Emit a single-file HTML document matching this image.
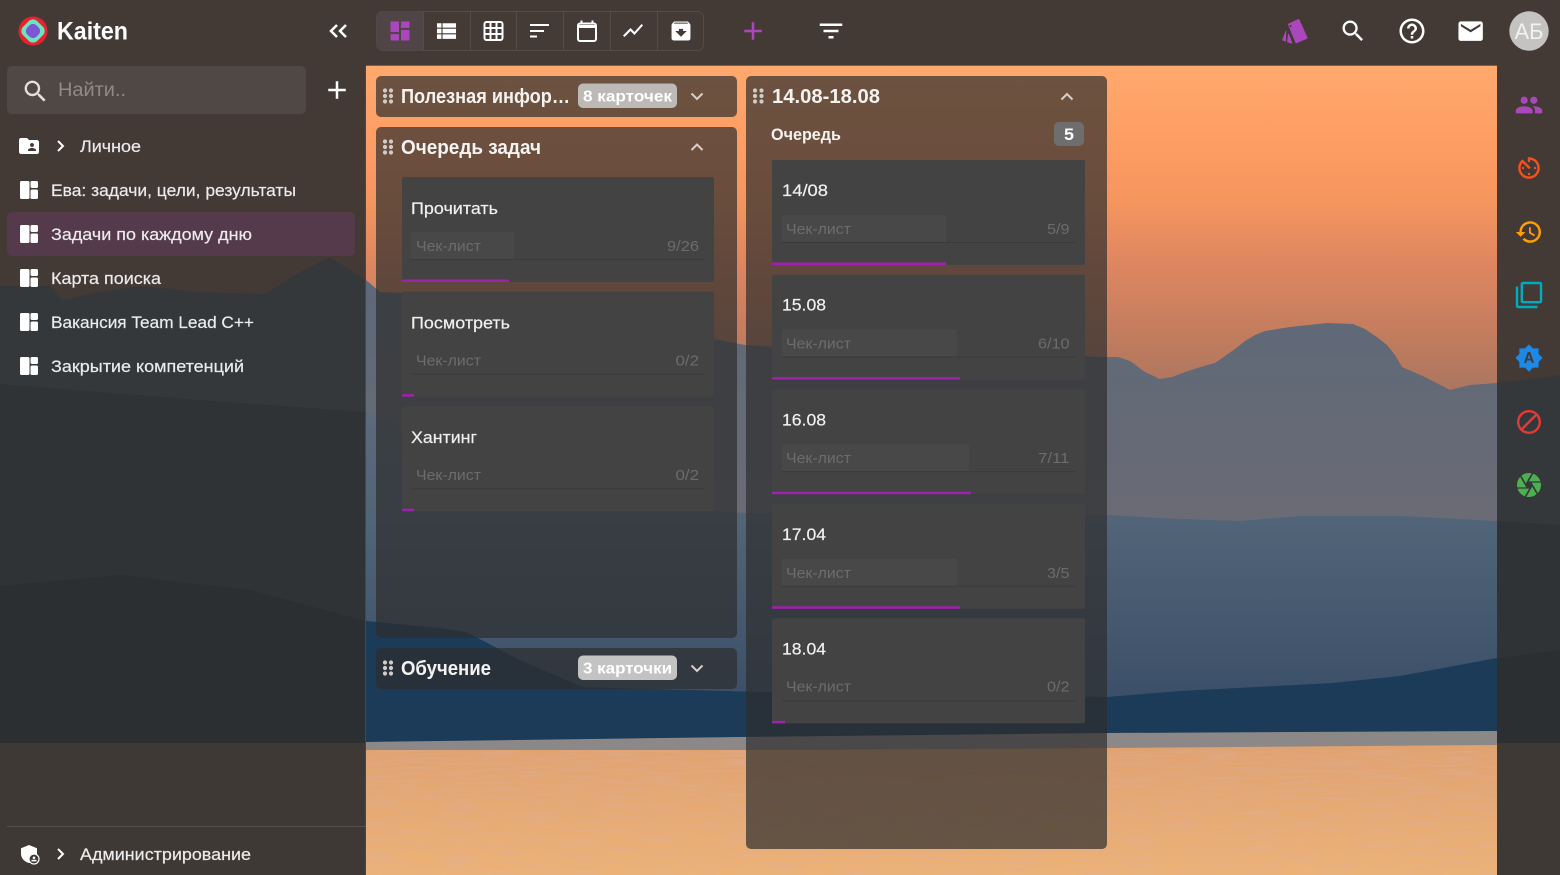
<!DOCTYPE html>
<html lang="ru"><head><meta charset="utf-8"><title>Kaiten</title>
<style>
html,body{margin:0;padding:0;width:1560px;height:875px;overflow:hidden;background:#433a36}
svg{display:block;position:absolute;left:0;top:0}
text{font-family:"Liberation Sans","Noto Sans CJK SC",sans-serif}
</style></head><body>
<svg width="1560" height="875" viewBox="0 0 1560 875" xmlns="http://www.w3.org/2000/svg">
<defs>
<linearGradient id="sky" gradientUnits="userSpaceOnUse" x1="0" y1="66" x2="0" y2="400">
<stop offset="0" stop-color="#ffa96e"/><stop offset=".25" stop-color="#fd9c63"/><stop offset=".4" stop-color="#f5965f"/><stop offset=".61" stop-color="#dc8560"/><stop offset=".82" stop-color="#c07c5e"/><stop offset="1" stop-color="#a87560"/>
</linearGradient>
<linearGradient id="m1" gradientUnits="userSpaceOnUse" x1="0" y1="260" x2="0" y2="530"><stop offset="0" stop-color="#5c6878"/><stop offset="1" stop-color="#6b6b75"/></linearGradient>
<linearGradient id="m2" gradientUnits="userSpaceOnUse" x1="0" y1="400" x2="0" y2="700"><stop offset="0" stop-color="#5d6b7b"/><stop offset=".4" stop-color="#526478"/><stop offset="1" stop-color="#3b4f68"/></linearGradient>
<linearGradient id="water" gradientUnits="userSpaceOnUse" x1="0" y1="745" x2="0" y2="875"><stop offset="0" stop-color="#e0a270"/><stop offset="1" stop-color="#edb275"/></linearGradient>
<filter id="ripple" x="0" y="0" width="100%" height="100%"><feTurbulence type="fractalNoise" baseFrequency="0.025 0.4" numOctaves="2" seed="4"/><feColorMatrix values="0 0 0 0 .72  0 0 0 0 .42  0 0 0 0 .36  1.6 0 0 0 -.62"/></filter>
<path id="pm1" d="M0 286L50 286 62 300 100 292 140 286 200 292 265 294 300 272 330 257 366 280 380 292 440 295 520 305 600 318 680 333 745 345 850 352 960 350 1040 355 1107 357 1118 357 1130 361 1145 372 1160 379 1172 377 1185 372 1207 365 1215 363 1225 356 1235 349 1245 341 1255 335 1265 331 1290 327 1327 323 1353 324 1365 329 1378 338 1387 345 1395 355 1402 367 1425 377 1450 390 1470 385 1497 383 1560 375V760H0Z"/>
<path id="pm2" d="M0 384L200 400 366 412 500 470 620 505 745 513 900 514 1107 515 1180 519 1240 521 1300 516 1400 516 1497 521 1560 525V760H0Z"/>
<path id="pm3" d="M0 586L120 575 250 590 366 621 440 628 466 632 520 660 583 687 800 693 1107 697 1180 691 1333 683 1400 676 1497 658 1560 650V760H0Z"/>
<clipPath id="rails"><rect x="0" y="66" width="366" height="809"/><rect x="1497" y="66" width="63" height="809"/></clipPath>
</defs>

<!-- background -->
<rect width="1560" height="875" fill="url(#sky)"/>
<use href="#pm1" fill="url(#m1)"/>
<use href="#pm2" fill="url(#m2)"/>
<use href="#pm3" fill="#1c3b58"/>
<path d="M0 743L366 742 740 737 1107 733 1497 731 1560 731V755H0Z" fill="#8c8888"/>
<path d="M0 752L366 750 800 750 1107 748 1497 745 1560 745V875H0Z" fill="url(#water)"/>
<rect x="366" y="750" width="1131" height="125" filter="url(#ripple)" opacity=".6"/>

<!-- chrome overlays -->
<rect x="0" y="0" width="1560" height="66" fill="#433a36"/>
<rect x="366" y="65" width="1131" height="1" fill="#6e645e"/>
<g clip-path="url(#rails)">
<rect x="0" y="66" width="1560" height="809" fill="#433a36"/>
<use href="#pm1" fill="#35383b"/>
<use href="#pm2" fill="#2f3336"/>
<use href="#pm3" fill="#2b2f32"/>
<rect x="0" y="743" width="1560" height="132" fill="#3f3935"/>
</g>
<rect x="365" y="66" width="1" height="809" fill="#4b4744"/>

<!-- left sidebar -->
<circle cx="33" cy="31" r="14.5" fill="#e9202e"/>
<rect x="23" y="21" width="20" height="20" rx="6" transform="rotate(45 33 31)" fill="#6ce4bd"/>
<rect x="26.5" y="24.500" width="13" height="13" rx="5" transform="rotate(45 33 31)" fill="#7d55d6"/>
<text x="57" y="39.500" font-size="25" font-weight="700" fill="#fff" textLength="71" lengthAdjust="spacingAndGlyphs">Kaiten</text>
<path d="M337 25l-6 6 6 6M346 25l-6 6 6 6" fill="none" stroke="#fff" stroke-width="2.500"/>
<rect x="7" y="66" width="299" height="48" rx="5" fill="#4f4844"/>
<g transform="translate(21 77) scale(1.2)" fill="#e2dfdc"><path d="M15.5 14h-.79l-.28-.27C15.41 12.59 16 11.11 16 9.500 16 5.910 13.090 3 9.500 3S3 5.910 3 9.500 5.910 16 9.500 16c1.610 0 3.090-.59 4.230-1.570l.27.28v.79l5 4.990L20.490 19l-4.990-5zm-6 0C7.010 14 5 11.990 5 9.500S7.010 5 9.500 5 14 7.010 14 9.500 11.990 14 9.500 14z"/></g>
<text x="58" y="96" font-size="19" fill="#918b87" textLength="68" lengthAdjust="spacingAndGlyphs">Найти..</text>
<g transform="translate(322 75) scale(1.25)" fill="#fff"><path d="M19 13h-6v6h-2v-6H5v-2h6V5h2v6h6v2z"/></g>

<g transform="translate(17 134)" fill="#fff"><path d="M20 6h-8l-2-2H4c-1.100 0-1.990.9-1.990 2L2 18c0 1.100.9 2 2 2h16c1.100 0 2-.9 2-2V8c0-1.100-.9-2-2-2zm-5 3c1.100 0 2 .9 2 2s-.9 2-2 2-2-.9-2-2 .9-2 2-2zm4 8h-8v-1c0-1.330 2.670-2 4-2s4 .67 4 2v1z"/></g>
<path d="M58 141l5 5-5 5" fill="none" stroke="#fff" stroke-width="2"/>
<text x="80" y="152" font-size="17" fill="#ebebeb" stroke="#ebebeb" stroke-width=".2" textLength="61" lengthAdjust="spacingAndGlyphs">Личное</text>

<rect x="7" y="212" width="348" height="44" rx="5" fill="#553a4c"/>

<g fill="#fff">
<rect x="20" y="181" width="9.500" height="18" rx="1.500"/><rect x="30.500" y="181" width="7.500" height="7" rx="1.500"/><rect x="30.500" y="189.500" width="7.500" height="9.500" rx="1.500"/>
<rect x="20" y="225" width="9.500" height="18" rx="1.500"/><rect x="30.500" y="225" width="7.500" height="7" rx="1.500"/><rect x="30.500" y="233.500" width="7.500" height="9.500" rx="1.500"/>
<rect x="20" y="269" width="9.500" height="18" rx="1.500"/><rect x="30.500" y="269" width="7.500" height="7" rx="1.500"/><rect x="30.500" y="277.500" width="7.500" height="9.500" rx="1.500"/>
<rect x="20" y="313" width="9.500" height="18" rx="1.500"/><rect x="30.500" y="313" width="7.500" height="7" rx="1.500"/><rect x="30.500" y="321.500" width="7.500" height="9.500" rx="1.500"/>
<rect x="20" y="357" width="9.500" height="18" rx="1.500"/><rect x="30.500" y="357" width="7.500" height="7" rx="1.500"/><rect x="30.500" y="365.500" width="7.500" height="9.500" rx="1.500"/>
</g>
<g font-size="17" fill="#ebebeb" stroke="#ebebeb" stroke-width=".2">
<text x="51" y="196" textLength="245" lengthAdjust="spacingAndGlyphs">Ева: задачи, цели, результаты</text>
<text x="51" y="240" textLength="201" lengthAdjust="spacingAndGlyphs">Задачи по каждому дню</text>
<text x="51" y="284" textLength="110" lengthAdjust="spacingAndGlyphs">Карта поиска</text>
<text x="51" y="328" textLength="203" lengthAdjust="spacingAndGlyphs">Вакансия Team Lead C++</text>
<text x="51" y="372" textLength="193" lengthAdjust="spacingAndGlyphs">Закрытие компетенций</text>
<text x="80" y="860" textLength="171" lengthAdjust="spacingAndGlyphs">Администрирование</text>
</g>
<rect x="7" y="826" width="359" height="1" fill="#55504c"/>
<path d="M29 845l8 3.200v5.500c0 4.500-3.400 8-8 9.300-4.600-1.300-8-4.800-8-9.300v-5.500z" fill="#fff"/>
<circle cx="34" cy="859" r="5" fill="#3d3936" stroke="#fff" stroke-width="1.200"/><circle cx="34" cy="857.800" r="1.300" fill="#fff"/><rect x="31.500" y="859.800" width="5" height="1.600" fill="#fff"/>
<path d="M58 849l5 5-5 5" fill="none" stroke="#fff" stroke-width="2"/>

<!-- toolbar -->
<rect x="376.500" y="11.500" width="327" height="39" rx="6" fill="#443b37" stroke="#554c48"/>
<path d="M382.500 11.500H423.500V50.500H382.500a6 6 0 0 1-6-6V17.500a6 6 0 0 1 6-6Z" fill="#504447"/>
<g stroke="#554c48"><path d="M423.500 11.500v39M470.500 11.500v39M516.500 11.500v39M563.500 11.500v39M610.500 11.500v39M657.500 11.500v39"/></g>
<g transform="translate(387.400 18.400) scale(1.050)" fill="#ab47bc"><path d="M3 13h8V3H3v10zm0 8h8v-6H3v6zm10 0h8V11h-8v10zm0-18v6h8V3h-8z"/></g>
<g transform="translate(432.500 17.600) scale(1.120)" fill="#fff"><path d="M4 14h4v-4H4v4zm0 5h4v-4H4v4zM4 9h4V5H4v4zm5 5h12v-4H9v4zm0 5h12v-4H9v4zM9 5v4h12V5H9z"/></g>
<g fill="none" stroke="#fff" stroke-width="2"><rect x="484.500" y="22" width="18" height="18" rx="2"/><path d="M490.500 22v18M496.500 22v18M484.500 28h18M484.500 34h18" stroke-width="2"/></g>
<g fill="#fff"><rect x="530" y="24" width="19" height="2"/><rect x="530" y="30" width="14" height="2"/><rect x="530" y="35.500" width="7" height="2"/></g>
<g fill="none" stroke="#fff"><rect x="578" y="23.500" width="18" height="17.500" rx="2" stroke-width="2"/><path d="M578 26.500h18" stroke-width="3"/><path d="M581.500 20.500v3M592.500 20.500v3" stroke-width="2"/></g>
<g transform="translate(621 18.500)" fill="#fff"><path d="M3.500 18.490l6-6.010 4 4L22 6.920l-1.410-1.410-7.090 7.970-4-4L2 16.990z"/></g>
<g transform="translate(668.400 18.400) scale(1.050)" fill="#fff"><path d="M20.540 5.230l-1.390-1.680C18.880 3.210 18.470 3 18 3H6c-.47 0-.88.21-1.160.55L3.460 5.230C3.170 5.570 3 6.020 3 6.500V19c0 1.100.9 2 2 2h14c1.100 0 2-.9 2-2V6.500c0-.48-.17-.93-.46-1.270zM12 17.500L6.500 12H10v-2h4v2h3.500L12 17.500zM5.120 5l.81-1h12l.94 1H5.120z"/></g>
<g transform="translate(738 16) scale(1.250)" fill="#ab47bc"><path d="M19 13h-6v6h-2v-6H5v-2h6V5h2v6h6v2z"/></g>
<g transform="translate(816 16) scale(1.250)" fill="#fff"><path d="M10 18h4v-2h-4v2zM3 6v2h18V6H3zm3 7h12v-2H6v2z"/></g>

<!-- top right -->
<g fill="#ab47bc" stroke="#ab47bc" stroke-linejoin="round"><path d="M1286 31l-3.500 9 3 1.200z" stroke-width=".8"/><path d="M1288.500 34l-1 8 4.500 1.300z" stroke-width=".8"/><path d="M1289 24.500l9.500-4.500 8 17.800-10.200 4.500z" stroke-width="2"/></g>
<circle cx="1290.500" cy="26" r="1" fill="#433a36"/>
<g transform="translate(1339 17) scale(1.170)" fill="#fff"><path d="M15.500 14h-.79l-.28-.27C15.410 12.590 16 11.110 16 9.500 16 5.910 13.090 3 9.500 3S3 5.910 3 9.500 5.910 16 9.500 16c1.610 0 3.090-.59 4.230-1.570l.27.28v.79l5 4.990L20.490 19l-4.990-5zm-6 0C7.010 14 5 11.990 5 9.500S7.010 5 9.500 5 14 7.010 14 9.500 11.990 14 9.500 14z"/></g>
<g transform="translate(1397 16) scale(1.250)" fill="#fff"><path d="M11 18h2v-2h-2v2zm1-16C6.480 2 2 6.480 2 12s4.480 10 10 10 10-4.480 10-10S17.520 2 12 2zm0 18c-4.410 0-8-3.590-8-8s3.590-8 8-8 8 3.590 8 8-3.590 8-8 8zm0-14c-2.210 0-4 1.790-4 4h2c0-1.100.9-2 2-2s2 .9 2 2c0 2-3 1.750-3 5h2c0-2.250 3-2.500 3-5 0-2.210-1.790-4-4-4z"/></g>
<g transform="translate(1456 16.500) scale(1.220)" fill="#fff"><path d="M20 4H4c-1.100 0-1.990.9-1.990 2L2 18c0 1.100.9 2 2 2h16c1.100 0 2-.9 2-2V6c0-1.100-.9-2-2-2zm0 4l-8 5-8-5V6l8 5 8-5v2z"/></g>
<circle cx="1529" cy="31" r="19.700" fill="#c5c3c1"/>
<text x="1514.500" y="39" font-size="22" fill="#f2f2f2" textLength="29" lengthAdjust="spacingAndGlyphs">АБ</text>

<!-- right rail -->
<g transform="translate(1514.600 90.600) scale(1.200)" fill="#ab47bc"><path d="M16 11c1.660 0 2.990-1.340 2.990-3S17.660 5 16 5c-1.660 0-3 1.340-3 3s1.340 3 3 3zm-8 0c1.660 0 2.990-1.340 2.990-3S9.660 5 8 5C6.340 5 5 6.340 5 8s1.340 3 3 3zm0 2c-2.330 0-7 1.170-7 3.500V19h14v-2.500c0-2.330-4.670-3.500-7-3.500zm8 0c-.29 0-.62.02-.97.05 1.160.84 1.970 1.970 1.970 3.450V19h6v-2.500c0-2.330-4.670-3.500-7-3.500z"/></g>
<g transform="translate(1514.600 153.600) scale(1.200)" fill="#f4511e"><path d="M11 17c0 .55.45 1 1 1s1-.45 1-1-.45-1-1-1-1 .45-1 1zm0-14v4h2V5.080c3.390.49 6 3.390 6 6.920 0 3.870-3.130 7-7 7s-7-3.130-7-7c0-1.680.59-3.220 1.580-4.420L12 13l1.410-1.410-6.800-6.800v.02C4.420 6.450 3 9.050 3 12c0 4.970 4.020 9 9 9 4.970 0 9-4.030 9-9s-4.030-9-9-9h-1zm7 9c0-.55-.45-1-1-1s-1 .45-1 1 .45 1 1 1 1-.45 1-1zM6 12c0 .55.45 1 1 1s1-.45 1-1-.45-1-1-1-1 .45-1 1z"/></g>
<g transform="translate(1514.600 217.600) scale(1.200)" fill="#ffa000"><path d="M13 3c-4.970 0-9 4.030-9 9H1l3.890 3.890.07.14L9 12H6c0-3.870 3.130-7 7-7s7 3.130 7 7-3.130 7-7 7c-1.930 0-3.680-.79-4.940-2.060l-1.420 1.420C8.270 19.990 10.510 21 13 21c4.970 0 9-4.030 9-9s-4.030-9-9-9zm-1 5v5l4.280 2.540.72-1.210-3.500-2.080V8H12z"/></g>
<g transform="translate(1514.600 280.600) scale(1.200)" fill="#00acc1"><path d="M3 5H1v16c0 1.100.9 2 2 2h16v-2H3V5zm18-4H7c-1.100 0-2 .9-2 2v14c0 1.100.9 2 2 2h14c1.100 0 2-.9 2-2V3c0-1.100-.9-2-2-2zm0 16H7V3h14v14z"/></g>
<g transform="translate(1514.600 343.600) scale(1.200)" fill="#1e88e5"><path d="M10.850 12.650h2.300L12 9l-1.150 3.650zM20 8.690V4h-4.690L12 .69 8.690 4H4v4.690L.69 12 4 15.310V20h4.690L12 23.310 15.310 20H20v-4.690L23.310 12 20 8.690zM14.300 16l-.7-2h-3.200l-.7 2H7.800L11 7h2l3.200 9h-1.900z"/></g>
<g transform="translate(1514.600 407.600) scale(1.200)" fill="#e53935"><path d="M12 2C6.480 2 2 6.480 2 12s4.480 10 10 10 10-4.480 10-10S17.520 2 12 2zM4 12c0-4.420 3.580-8 8-8 1.850 0 3.550.63 4.900 1.690L5.690 16.900C4.630 15.550 4 13.850 4 12zm8 8c-1.850 0-3.550-.63-4.900-1.690L18.310 7.100C19.370 8.450 20 10.150 20 12c0 4.420-3.580 8-8 8z"/></g>
<g transform="translate(1514.600 470.600) scale(1.200)" fill="#4caf50"><path d="M9.400 10.500l4.770-8.260C13.470 2.090 12.750 2 12 2c-2.400 0-4.600.85-6.320 2.250l3.660 6.350.06-.1zM21.540 9c-.92-2.920-3.150-5.260-6-6.340L11.880 9h9.660zm.26 1h-7.490l.29.5 4.760 8.250C21 16.970 22 14.610 22 12c0-.69-.07-1.350-.2-2zM8.540 12l-3.900-6.750C3.010 7.030 2 9.390 2 12c0 .69.07 1.350.2 2h7.490l-1.150-2zm-6.080 3c.92 2.920 3.150 5.260 6 6.340L12.120 15H2.460zm11.270 0l-3.900 6.760c.7.15 1.420.24 2.170.24 2.400 0 4.600-.85 6.320-2.250l-3.660-6.350-.93 1.600z"/></g>

<!-- column panels -->
<g fill="#2d2d2d" fill-opacity=".7">
<rect x="376" y="76" width="361" height="41" rx="5"/>
<rect x="376" y="127" width="361" height="511" rx="5"/>
<rect x="376" y="648" width="361" height="41" rx="5"/>
<rect x="746" y="76" width="361" height="773" rx="5"/>
</g>
<g fill="#d0ccc8">
<circle cx="385" cy="90.500" r="2.100"/><circle cx="391" cy="90.500" r="2.100"/><circle cx="385" cy="96" r="2.100"/><circle cx="391" cy="96" r="2.100"/><circle cx="385" cy="101.500" r="2.100"/><circle cx="391" cy="101.500" r="2.100"/>
<circle cx="385" cy="141.500" r="2.100"/><circle cx="391" cy="141.500" r="2.100"/><circle cx="385" cy="147" r="2.100"/><circle cx="391" cy="147" r="2.100"/><circle cx="385" cy="152.500" r="2.100"/><circle cx="391" cy="152.500" r="2.100"/>
<circle cx="385" cy="662.500" r="2.100"/><circle cx="391" cy="662.500" r="2.100"/><circle cx="385" cy="668" r="2.100"/><circle cx="391" cy="668" r="2.100"/><circle cx="385" cy="673.500" r="2.100"/><circle cx="391" cy="673.500" r="2.100"/>
<circle cx="755" cy="90.500" r="2.100"/><circle cx="761.500" cy="90.500" r="2.100"/><circle cx="755" cy="96" r="2.100"/><circle cx="761.500" cy="96" r="2.100"/><circle cx="755" cy="101.500" r="2.100"/><circle cx="761.500" cy="101.500" r="2.100"/>
</g>
<g font-size="20" font-weight="700" fill="#f5f3f1">
<text x="401" y="103" textLength="169" lengthAdjust="spacingAndGlyphs">Полезная инфор…</text>
<text x="401" y="154" textLength="140" lengthAdjust="spacingAndGlyphs">Очередь задач</text>
<text x="401" y="675" textLength="90" lengthAdjust="spacingAndGlyphs">Обучение</text>
<text x="772" y="103" textLength="108" lengthAdjust="spacingAndGlyphs">14.08-18.08</text>
</g>
<rect x="578" y="83.500" width="99" height="24.500" rx="5" fill="#bdb9b6"/>
<rect x="578" y="655.500" width="99" height="24.500" rx="5" fill="#c3c3c3"/>
<g font-size="16" font-weight="700" fill="#fff">
<text x="583" y="101.500" textLength="89" lengthAdjust="spacingAndGlyphs">8 карточек</text>
<text x="583" y="673.500" textLength="89" lengthAdjust="spacingAndGlyphs">3 карточки</text>
</g>
<g fill="none" stroke="#d8d0ca" stroke-width="2">
<path d="M691.500 93.500l5.500 5.500 5.500-5.500"/>
<path d="M691.500 150l5.500-5.500 5.500 5.500"/>
<path d="M691.500 665.500l5.500 5.500 5.500-5.500"/>
<path d="M1061.500 99.500l5.500-5.500 5.500 5.500"/>
</g>
<text x="771" y="140" font-size="17" font-weight="700" fill="#f5f3f1" textLength="70" lengthAdjust="spacingAndGlyphs">Очередь</text>
<rect x="1054" y="122" width="30" height="24" rx="5" fill="#6e6e6e"/>
<text x="1064" y="140" font-size="17" font-weight="700" fill="#fff" textLength="10" lengthAdjust="spacingAndGlyphs">5</text>

<!-- cards -->
<g fill="#434343">
<rect x="402" y="177" width="312" height="105" rx="2"/>
<rect x="402" y="291.600" width="312" height="105" rx="2"/>
<rect x="402" y="406.200" width="312" height="105" rx="2"/>
<rect x="772" y="160" width="313" height="105" rx="2"/>
<rect x="772" y="274.600" width="313" height="105" rx="2"/>
<rect x="772" y="389.200" width="313" height="105" rx="2"/>
<rect x="772" y="503.800" width="313" height="105" rx="2"/>
<rect x="772" y="618.400" width="313" height="105" rx="2"/>
</g>
<g fill="#484848">
<rect x="411" y="232" width="103" height="27"/>
<rect x="782" y="215" width="164" height="27"/>
<rect x="782" y="329.600" width="175" height="27"/>
<rect x="782" y="444.200" width="187" height="27"/>
<rect x="782" y="558.800" width="175" height="27"/>
</g>
<g fill="#3a3a3a">
<rect x="411" y="259" width="293" height="1"/><rect x="411" y="373.600" width="293" height="1"/><rect x="411" y="488.200" width="293" height="1"/>
<rect x="782" y="242" width="293" height="1"/><rect x="782" y="356.600" width="293" height="1"/><rect x="782" y="471.200" width="293" height="1"/><rect x="782" y="585.800" width="293" height="1"/><rect x="782" y="700.400" width="293" height="1"/>
</g>
<g fill="#a020b0">
<rect x="402" y="279.500" width="107" height="2.500"/><rect x="402" y="394.100" width="12" height="2.500"/><rect x="402" y="508.700" width="12" height="2.500"/>
<rect x="772" y="262.500" width="174" height="2.500"/><rect x="772" y="377.100" width="188" height="2.500"/><rect x="772" y="491.700" width="199" height="2.500"/><rect x="772" y="606.300" width="188" height="2.500"/><rect x="772" y="720.900" width="13" height="2.500"/>
</g>
<g font-size="17" fill="#f0f0f0" stroke="#f0f0f0" stroke-width=".2">
<text x="411" y="214" textLength="87" lengthAdjust="spacingAndGlyphs">Прочитать</text>
<text x="411" y="328.600" textLength="99" lengthAdjust="spacingAndGlyphs">Посмотреть</text>
<text x="411" y="443" textLength="66" lengthAdjust="spacingAndGlyphs">Хантинг</text>
<text x="782" y="196" textLength="46" lengthAdjust="spacingAndGlyphs">14/08</text>
<text x="782" y="310.600" textLength="44" lengthAdjust="spacingAndGlyphs">15.08</text>
<text x="782" y="425.400" textLength="44" lengthAdjust="spacingAndGlyphs">16.08</text>
<text x="782" y="539.800" textLength="44" lengthAdjust="spacingAndGlyphs">17.04</text>
<text x="782" y="654.400" textLength="44" lengthAdjust="spacingAndGlyphs">18.04</text>
</g>
<g font-size="15" fill="#6c6c6c">
<text x="416" y="251" textLength="65" lengthAdjust="spacingAndGlyphs">Чек-лист</text><text x="667" y="251" textLength="32" lengthAdjust="spacingAndGlyphs">9/26</text>
<text x="416" y="365.600" textLength="65" lengthAdjust="spacingAndGlyphs">Чек-лист</text><text x="675.500" y="365.600" textLength="23.500" lengthAdjust="spacingAndGlyphs">0/2</text>
<text x="416" y="480.200" textLength="65" lengthAdjust="spacingAndGlyphs">Чек-лист</text><text x="675.500" y="480.200" textLength="23.500" lengthAdjust="spacingAndGlyphs">0/2</text>
<text x="786" y="234" textLength="65" lengthAdjust="spacingAndGlyphs">Чек-лист</text><text x="1047" y="234" textLength="22.500" lengthAdjust="spacingAndGlyphs">5/9</text>
<text x="786" y="348.600" textLength="65" lengthAdjust="spacingAndGlyphs">Чек-лист</text><text x="1038" y="348.600" textLength="31.500" lengthAdjust="spacingAndGlyphs">6/10</text>
<text x="786" y="463.200" textLength="65" lengthAdjust="spacingAndGlyphs">Чек-лист</text><text x="1038" y="463.200" textLength="31.500" lengthAdjust="spacingAndGlyphs">7/11</text>
<text x="786" y="577.800" textLength="65" lengthAdjust="spacingAndGlyphs">Чек-лист</text><text x="1047" y="577.800" textLength="22.500" lengthAdjust="spacingAndGlyphs">3/5</text>
<text x="786" y="691.600" textLength="65" lengthAdjust="spacingAndGlyphs">Чек-лист</text><text x="1047" y="691.600" textLength="22.500" lengthAdjust="spacingAndGlyphs">0/2</text>
</g>
</svg>
</body></html>
